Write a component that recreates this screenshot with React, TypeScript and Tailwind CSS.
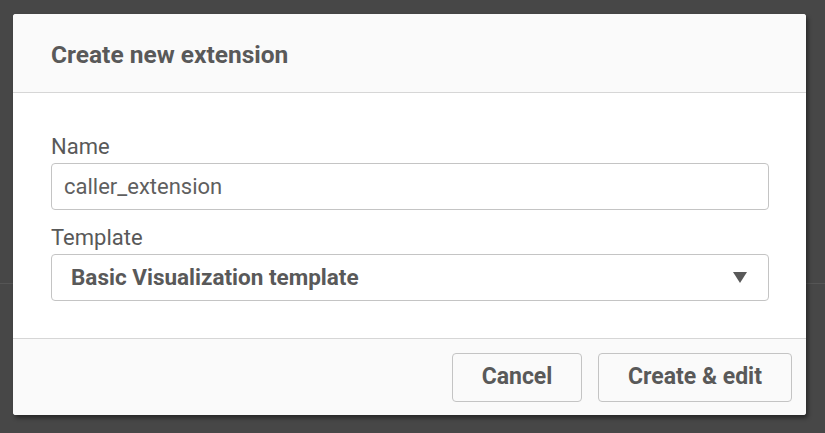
export default function App() {
  return (
    <div
      className="relative h-[433px] w-[825px] overflow-hidden bg-[#474747]"
      style={{ fontFamily: "Roboto, 'Noto Sans', sans-serif" }}
    >
      {/* backdrop: faint divider of the page behind the modal */}
      <div className="h-[284px] border-b border-[#555555]" />

      <div className="absolute left-[13px] top-[14px] flex w-[793px] flex-col overflow-hidden rounded-[3px] bg-white shadow-[2px_3px_4px_rgba(0,0,0,0.45)]">
        <div className="flex h-[79px] items-center border-b border-[#d6d6d6] bg-[#fafafa] pl-[38px] pt-[4px]">
          <h1 className="text-[24.5px] font-bold text-[#595959]">Create new extension</h1>
        </div>

        <div className="flex h-[245px] flex-col px-[37px] pl-[38px] pt-[38px]">
          <label className="h-[32px] text-[22px] leading-[32px] text-[#595959]">Name</label>
          <div className="flex h-[47px] items-center rounded-[4px] border border-[#c4c4c4] pl-[12px] text-[22px] text-[#5f5f5f]">
            caller_extension
          </div>
          <label className="mt-[12px] h-[32px] text-[22px] leading-[32px] text-[#595959]">
            Template
          </label>
          <div className="flex h-[47px] items-center justify-between rounded-[4px] border border-[#c4c4c4] pl-[19px] pr-[21px] text-[22.5px] font-bold text-[#595959]">
            <span>Basic Visualization template</span>
            <svg width="14" height="11" viewBox="0 0 14 11">
              <path d="M0 0 L14 0 L7 11 Z" fill="#595959" />
            </svg>
          </div>
        </div>

        <div className="flex h-[77px] items-center justify-end gap-[16px] border-t border-[#d6d6d6] bg-[#fafafa] pr-[14px]">
          <button className="h-[49px] w-[130px] rounded-[4px] border border-[#c4c4c4] bg-[#fafafa] text-[23px] font-bold text-[#595959]">
            Cancel
          </button>
          <button className="h-[49px] w-[194px] rounded-[4px] border border-[#c4c4c4] bg-[#fafafa] text-[23px] font-bold text-[#595959]">
            Create &amp; edit
          </button>
        </div>
      </div>
    </div>
  );
}
